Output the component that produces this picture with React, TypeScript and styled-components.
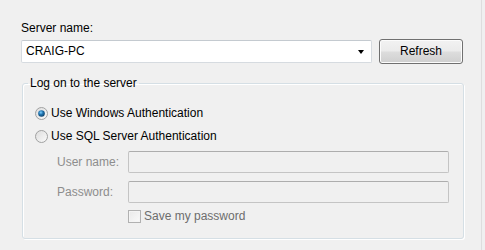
import styled, { createGlobalStyle } from "styled-components";

const GlobalStyle = createGlobalStyle`
  html, body {
    margin: 0;
    padding: 0;
    background: #f0f0f0;
  }
  body {
    font-family: "Liberation Sans", Arial, sans-serif;
    font-size: 12px;
    color: #000;
  }
`;

const Page = styled.div`
  box-sizing: border-box;
  width: 482px;
  height: 250px;
  padding: 21px 0 0 21px;
  background: #f0f0f0;
  border-right: 1px solid #dedede;
  line-height: 15px;
`;

const Label = styled.div`
  height: 15px;
`;

const ServerRow = styled.div`
  display: flex;
  align-items: center;
  gap: 7px;
  margin-top: 3px;
  height: 25px;
`;

const Combo = styled.div`
  box-sizing: border-box;
  width: 351px;
  height: 23px;
  display: flex;
  align-items: center;
  justify-content: space-between;
  padding: 0 6px 0 4px;
  background: #fff;
  border: 1px solid #d6dbe0;
  border-top-color: #c4cad0;
  border-radius: 2px;
`;

const Arrow = styled.span`
  width: 0;
  height: 0;
  border-left: 3.5px solid transparent;
  border-right: 3.5px solid transparent;
  border-top: 4px solid #000;
  margin-right: 1px;
`;

const Button = styled.button`
  box-sizing: border-box;
  width: 84px;
  height: 25px;
  padding: 0;
  font: inherit;
  color: #000;
  border: 1px solid #707070;
  border-radius: 3px;
  background: linear-gradient(#f2f2f2 0%, #ebebeb 48%, #dddddd 52%, #cfcfcf 100%);
  box-shadow: inset 0 0 0 1px #fcfcfc;
`;

const Group = styled.fieldset`
  box-sizing: border-box;
  width: 442px;
  margin: 12px 0 0 1px;
  padding: 0;
  border: 1px solid #d5dfe5;
  border-radius: 3px;
  box-shadow: 1px 1px 0 #fff, inset 1px 1px 0 #fff;
  min-inline-size: 0;
`;

const Legend = styled.legend`
  margin-left: 5px;
  padding: 0 2px;
  line-height: 15px;
`;

const GroupBody = styled.div`
  padding: 14px 13px 15px 12px;
`;

const Options = styled.div`
  display: flex;
  flex-direction: column;
  gap: 7px;
`;

const Choice = styled.label`
  display: flex;
  align-items: center;
  gap: 3px;
  height: 16px;
`;

const Credentials = styled.div`
  display: grid;
  grid-template-columns: 71px 321px;
  row-gap: 8px;
  align-items: center;
  margin: 7px 0 0 22px;
`;

const FieldLabel = styled.span`
  color: #8d8d8d;
`;

const Field = styled.div`
  box-sizing: border-box;
  height: 22px;
  background: #f0f0f0;
  border: 1px solid #c4c4c4;
  border-top-color: #adadad;
  border-radius: 2px;
`;

const SaveRow = styled.label`
  grid-column: 2;
  display: flex;
  align-items: center;
  gap: 3px;
  height: 14px;
  margin-top: -2px;
  color: #6d6d6d;
`;

const Box = styled.span`
  box-sizing: border-box;
  width: 13px;
  height: 13px;
  border: 1px solid #b1b1b1;
  background: linear-gradient(135deg, #e9e9e9, #fafafa);
  box-shadow: inset 0 0 0 1px #f4f4f4;
`;

function Radio({ checked }: { checked?: boolean }) {
  return (
    <svg width="13" height="13" viewBox="0 0 13 13">
      <defs>
        <linearGradient id="ring" x1="0" y1="0" x2="1" y2="1">
          <stop offset="0" stopColor="#dcdcdc" />
          <stop offset="1" stopColor="#fbfbfb" />
        </linearGradient>
        <radialGradient id="dot" cx="0.4" cy="0.35" r="0.7">
          <stop offset="0" stopColor="#7ed0ff" />
          <stop offset="0.45" stopColor="#1f74b0" />
          <stop offset="1" stopColor="#0d3e64" />
        </radialGradient>
      </defs>
      <circle cx="6.5" cy="6.5" r="6" fill="url(#ring)" stroke="#a0a1a1" strokeWidth="1" />
      {checked && <circle cx="6.5" cy="6.5" r="3.3" fill="url(#dot)" />}
    </svg>
  );
}

export default function App() {
  return (
    <>
      <GlobalStyle />
      <Page>
        <Label>Server name:</Label>
        <ServerRow>
          <Combo>
            <span>CRAIG-PC</span>
            <Arrow />
          </Combo>
          <Button>Refresh</Button>
        </ServerRow>
        <Group>
          <Legend>Log on to the server</Legend>
          <GroupBody>
            <Options>
              <Choice>
                <Radio checked />
                Use Windows Authentication
              </Choice>
              <Choice>
                <Radio />
                Use SQL Server Authentication
              </Choice>
            </Options>
            <Credentials>
              <FieldLabel>User name:</FieldLabel>
              <Field />
              <FieldLabel>Password:</FieldLabel>
              <Field />
              <SaveRow>
                <Box />
                Save my password
              </SaveRow>
            </Credentials>
          </GroupBody>
        </Group>
      </Page>
    </>
  );
}
